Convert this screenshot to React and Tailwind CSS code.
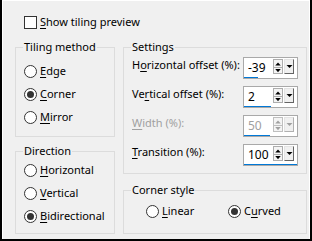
import React from "react";

const font = { fontFamily: "'Noto Sans', 'Open Sans', sans-serif" };

// label with one underlined access key
const Key = ({ a = "", k, b = "" }) => (
  <span className="whitespace-nowrap">
    {a}
    <u className="underline-offset-[2px]">{k}</u>
    {b}
  </span>
);

const Radio = ({ checked, children }) => (
  <div className="flex items-center h-4 gap-[3px]">
    <span className="w-[13px] h-[13px] rounded-full border border-[#333333] bg-white flex items-center justify-center shrink-0">
      {checked && <span className="w-[7px] h-[7px] rounded-full bg-[#333333]" />}
    </span>
    <span className="text-[11px] leading-4 text-black">{children}</span>
  </div>
);

const Group = ({ title, className, children }) => (
  <div className={`relative border border-[#dcdcdc] ${className}`}>
    <span className="absolute -top-[9px] left-[7px] px-[1px] bg-[#f0f0f0] text-[11px] leading-4 text-black whitespace-nowrap">
      {title}
    </span>
    {children}
  </div>
);

const Spin = ({ disabled }) => {
  const c = disabled ? "border-[#bfbfbf]" : "border-[#adadad]";
  const f = disabled ? "#a0a0a0" : "#000000";
  return (
    <div className="flex items-start pt-[1px] gap-[1px]">
      <div className={`w-[10px] h-[15px] border ${c} bg-[#f4f4f4] flex flex-col`}>
        <svg width="8" height="6" viewBox="0 0 8 6" className="mt-[1px]">
          <path d="M1 5 L4 1.5 L7 5 Z" fill={f} />
        </svg>
        <div className={`h-0 border-t ${c}`} />
        <svg width="8" height="6" viewBox="0 0 8 6">
          <path d="M1 1 L4 4.5 L7 1 Z" fill={f} />
        </svg>
      </div>
      <div
        className={`w-[10px] h-[15px] border-t border-l border-[#e3e3e3] border-r border-b ${
          disabled ? "border-r-[#b0b0b0] border-b-[#b0b0b0]" : "border-r-[#646464] border-b-[#646464]"
        } bg-[#f0f0f0] flex items-center justify-center`}
      >
        <svg width="7" height="5" viewBox="0 0 7 5">
          <path d="M0.5 1 L3.5 4 L6.5 1 Z" fill={f} />
        </svg>
      </div>
    </div>
  );
};

const NumField = ({ value, bar, disabled }) => (
  <div className="w-[55px] h-[22px] border border-[#a9a9a9] bg-white flex flex-col shrink-0">
    <div className="flex-1 flex">
      <span
        className={`flex-1 pl-[4px] text-[12px] leading-[19px] ${
          disabled ? "text-[#a0a0a0]" : "text-black"
        }`}
      >
        {value}
      </span>
      <Spin disabled={disabled} />
      <div className="w-[3px]" />
    </div>
    <div className={`h-[2px] bg-[#0078d7] ${bar}`} />
  </div>
);

const Row = ({ label, disabled, children }) => (
  <div className="flex items-start">
    <span
      className={`w-[111px] text-[11px] leading-4 whitespace-nowrap ${
        disabled ? "text-[#a0a0a0]" : "text-black"
      }`}
    >
      {label}
    </span>
    {children}
  </div>
);

export default function App() {
  return (
    <div
      className="w-[312px] h-[241px] bg-black pl-[2px] pr-[2px] pb-[2px]"
      style={font}
    >
      <div className="w-full h-full bg-[#f0f0f0] border-t border-l border-r border-white pl-[12px] pt-[13px]">
        {/* top checkbox */}
        <div className="flex items-center h-4 pl-[9px] gap-[3px]">
          <span className="w-[13px] h-[13px] border border-[#333333] bg-white" />
          <span className="text-[11px] leading-4 text-black">
            <Key k="S" b="how tiling preview" />
          </span>
        </div>

        <div className="flex gap-[8px] mt-[17px]">
          {/* left column */}
          <div className="flex flex-col w-[100px]">
            <Group title="Tiling method" className="h-[90px] pl-[8px] pt-[15px]">
              <div className="flex flex-col gap-[7px]">
                <Radio>
                  <Key k="E" b="dge" />
                </Radio>
                <Radio checked>
                  <Key k="C" b="orner" />
                </Radio>
                <Radio>
                  <Key k="M" b="irror" />
                </Radio>
              </div>
            </Group>
            <Group title="Direction" className="h-[83px] mt-[14px] pl-[8px] pt-[10px]">
              <div className="flex flex-col gap-[7px]">
                <Radio>
                  <Key k="H" b="orizontal" />
                </Radio>
                <Radio>
                  <Key k="V" b="ertical" />
                </Radio>
                <Radio checked>
                  <Key k="B" b="idirectional" />
                </Radio>
              </div>
            </Group>
          </div>

          {/* right column */}
          <div className="flex flex-col w-[184px]">
            <Group title="Settings" className="h-[127px] pl-[8px] pt-[9px]">
              <div className="flex flex-col gap-[7px]">
                <Row label={<Key a="H" k="o" b="rizontal offset (%):" />}>
                  <NumField value="-39" bar="w-[14px]" />
                </Row>
                <Row label={<Key a="Ve" k="r" b="tical offset (%):" />}>
                  <NumField value="2" bar="w-[27px]" />
                </Row>
                <Row disabled label={<Key k="W" b="idth (%):" />}>
                  <NumField value="50" bar="w-[26px]" disabled />
                </Row>
                <Row label={<Key k="T" b="ransition (%):" />}>
                  <NumField value="100" bar="w-full" />
                </Row>
              </div>
            </Group>
            <Group title="Corner style" className="h-[44px] mt-[16px] pl-[22px] pt-[12px]">
              <div className="flex">
                <div className="w-[82px]">
                  <Radio>
                    <Key k="L" b="inear" />
                  </Radio>
                </div>
                <Radio checked>
                  <Key a="C" k="u" b="rved" />
                </Radio>
              </div>
            </Group>
          </div>
        </div>
      </div>
    </div>
  );
}
